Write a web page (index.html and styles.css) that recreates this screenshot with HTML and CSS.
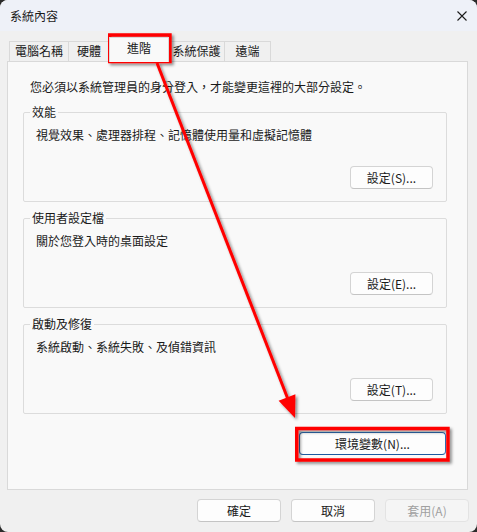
FILE: index.html
```html
<!DOCTYPE html>
<html lang="zh-Hant">
<head>
<meta charset="utf-8">
<title>系統內容</title>
<link rel="stylesheet" href="styles.css">
</head>
<body>
<div class="window">
  <div class="titlebar">
    <span class="title">系統內容</span>
    <svg class="close" width="10" height="10" viewBox="0 0 10 10"><path d="M0.5 0.5 L9.5 9.5 M9.5 0.5 L0.5 9.5" stroke="#1b1b1b" stroke-width="1.1" fill="none"/></svg>
  </div>
  <div class="tabs">
    <div class="tab t1">電腦名稱</div>
    <div class="tab t2">硬體</div>
    <div class="tab t3 selected">進階</div>
    <div class="tab t4">系統保護</div>
    <div class="tab t5">遠端</div>
  </div>
  <div class="panel">
    <div class="intro">您必須以系統管理員的身分登入，才能變更這裡的大部分設定。</div>
    <fieldset class="group">
      <legend>效能</legend>
      <div class="desc">視覺效果、處理器排程、記憶體使用量和虛擬記憶體</div>
      <button class="btn set">設定(S)...</button>
    </fieldset>
    <fieldset class="group">
      <legend>使用者設定檔</legend>
      <div class="desc">關於您登入時的桌面設定</div>
      <button class="btn set">設定(E)...</button>
    </fieldset>
    <fieldset class="group">
      <legend>啟動及修復</legend>
      <div class="desc">系統啟動、系統失敗、及偵錯資訊</div>
      <button class="btn set">設定(T)...</button>
    </fieldset>
    <div class="env-row">
      <button class="btn env">環境變數(N)...</button>
    </div>
  </div>
  <div class="footer">
    <button class="btn foot">確定</button>
    <button class="btn foot">取消</button>
    <button class="btn foot disabled" disabled>套用(A)</button>
  </div>
  <svg class="annot" width="477" height="532" viewBox="0 0 477 532">
    <defs>
      <filter id="sh" x="-10%" y="-10%" width="120%" height="120%">
        <feDropShadow dx="2" dy="2" stdDeviation="1.8" flood-color="#000" flood-opacity="0.45"/>
      </filter>
    </defs>
    <g filter="url(#sh)">
      <rect x="109.75" y="35" width="60.2" height="26.5" fill="none" stroke="#ff0000" stroke-width="3.5"/>
      <rect x="296.75" y="428.5" width="151.2" height="31.5" fill="none" stroke="#ff0000" stroke-width="3.5"/>
      <line x1="157" y1="63" x2="287.5" y2="398" stroke="#ff0000" stroke-width="3"/>
      <polygon points="295,418 278.6,400.7 295.4,394.2" fill="#ff0000"/>
    </g>
  </svg>
</div>
</body>
</html>
```

FILE: styles.css
```css
* { box-sizing: border-box; }
html, body { margin: 0; padding: 0; }
body {
  width: 477px;
  height: 532px;
  overflow: hidden;
  background: #2b2b2b;
  font-family: "Noto Sans CJK TC", "Noto Sans", sans-serif;
  font-size: 12px;
  color: #1a1a1a;
}
.window {
  position: relative;
  width: 477px;
  height: 532px;
  background: #f0f0f0;
  border-radius: 8px;
  overflow: hidden;
}
.titlebar {
  height: 31px;
  background: #eef1f8;
  display: flex;
  align-items: center;
  justify-content: space-between;
  padding: 0 10px;
  line-height: 16px;
  color: #1b1b1b;
}
.close { display: block; }
.tabs {
  display: flex;
  align-items: flex-end;
  height: 24px;
  margin-top: 6px;
  padding-left: 9px;
}
.tab {
  height: 20px;
  border: 1px solid #d9d9d9;
  border-bottom: none;
  background: #f0f0f0;
  line-height: 18px;
  text-align: center;
  margin-left: -1px;
  color: #1a1a1a;
}
.tab.t1 { width: 60px; margin-left: 0; }
.tab.t2 { width: 42px; }
.tab.t3 { width: 60px; }
.tab.t4 { width: 57px; }
.tab.t5 { width: 47px; }
.tab.selected {
  height: 25px;
  margin-bottom: -1px;
  background: #f9f9f9;
  line-height: 20px;
  z-index: 1;
}
.panel {
  margin-left: 7px;
  width: 461px;
  height: 429px;
  border: 1px solid #d9d9d9;
  background: #f9f9f9;
  padding: 17px 20px 0 15px;
}
.intro {
  line-height: 16px;
  padding-left: 7px;
}
.group {
  margin: 9px 0 0 0;
  padding: 7px 13px 12px 12px;
  border: 1px solid #dcdcdc;
  border-radius: 2px;
  min-inline-size: 0;
}
.group + .group { margin-top: 8px; }
.group legend {
  padding: 0 2px;
  margin-left: -6px;
  line-height: 16px;
}
.desc { line-height: 16px; }
.btn {
  font: inherit;
  font-size: 12px;
  color: #1a1a1a;
  background: #fdfdfd;
  border: 1px solid #d4d4d4;
  border-bottom-color: #c4c4c4;
  border-radius: 4px;
  padding: 0;
  height: 23px;
  line-height: 21px;
  text-align: center;
}
.btn.set {
  display: block;
  width: 83px;
  margin: 23px 0 0 auto;
}
.env-row {
  display: flex;
  justify-content: flex-end;
  margin-top: 18px;
  padding-right: 1px;
}
.btn.env {
  width: 147px;
  border-color: #2f6db3;
  border-bottom-color: #1d5aa0;
}
.footer {
  display: flex;
  justify-content: flex-end;
  gap: 10px;
  margin-top: 9px;
  padding-right: 8px;
}
.btn.foot { width: 84px; }
.btn.disabled {
  color: #a0a0a0;
  background: #f5f5f5;
  border-color: #e3e3e3;
}
.annot {
  position: absolute;
  left: 0;
  top: 0;
  pointer-events: none;
}
```
